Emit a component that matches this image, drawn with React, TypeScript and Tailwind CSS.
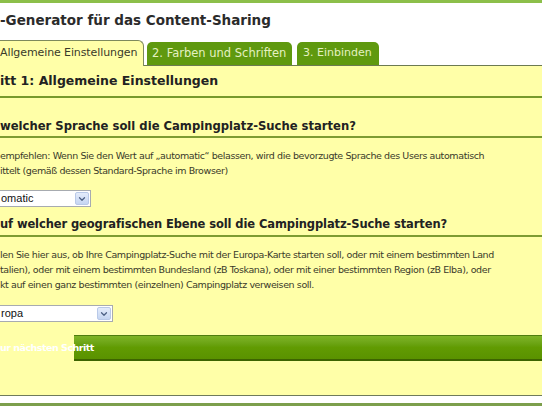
import { ChevronDown } from "lucide-react";

function FakeSelect({ value, width }: { value: string; width: string }) {
  return (
    <div className={`relative h-[17px] ${width} bg-white border border-[#a7abb0] border-l-0`}>
      <span className="block pl-[1px] text-[11px] leading-[15px] text-[#111] font-['Liberation_Sans',sans-serif]">
        {value}
      </span>
      {/* dropdown arrow box */}
      <div className="absolute right-[1px] top-[1px] bottom-[1px] w-[14px] flex items-center justify-center rounded-[2px] bg-gradient-to-b from-[#e4ecfb] to-[#c5d5f2] border border-[#b9c9e8]">
        <ChevronDown className="w-[10px] h-[10px] text-[#4d6185]" strokeWidth={3} />
      </div>
    </div>
  );
}

export default function App() {
  return (
    <div className="w-[542px] h-[406px] overflow-hidden bg-white flex flex-col text-[#333] font-['DejaVu_Sans',Verdana,sans-serif]">
      <div className="h-[3px] bg-[#8cbf4a]" />

      {/* Title */}
      <div className="h-[38px] flex items-center pb-[3px]">
        <h1 className="text-[13.5px] font-bold whitespace-nowrap text-[#2b2b2b]">
          -Generator für das Content-Sharing
        </h1>
      </div>

      {/* Tabs */}
      <div className="h-[25px] flex items-end border-b border-[#6c7a52] whitespace-nowrap">
        <div className="-mb-px h-[26px] w-[146px] -ml-[2px] pl-[1px] flex items-center bg-[#ffffa8] border border-b-0 border-[#7e8a5c] rounded-tr-[6px] text-[11px] tracking-[-0.1px] text-[#3a3a2a]">
          Allgemeine Einstellungen
        </div>
        <div className="ml-[3px] h-[23px] w-[145px] flex items-center pl-[5px] bg-[#5f990f] rounded-t-[5px] text-[11.5px] text-[#e4f1c2]">
          2. Farben und Schriften
        </div>
        <div className="ml-[5px] h-[23px] w-[82px] flex items-center pl-[6px] bg-[#5f990f] rounded-t-[5px] text-[11px] text-[#e4f1c2]">
          3. Einbinden
        </div>
      </div>

      {/* Content */}
      <div className="h-[329px] bg-[#ffffa8] flex flex-col whitespace-nowrap">
        <div className="h-[32px] flex items-center border-b-2 border-[#779a2c]">
          <h2 className="text-[12.5px] font-bold text-[#222]">itt 1: Allgemeine Einstellungen</h2>
        </div>

        <div className="mt-[19px] h-[19px] flex items-center border-b-2 border-[#7d9c32] box-content">
          <h3 className="text-[11.6px] font-bold text-[#222]"> welcher Sprache soll die Campingplatz-Suche starten?</h3>
        </div>

        <div className="mt-[10px] text-[9.5px] leading-[15px] tracking-[-0.4px] text-[#3a3a2a]">
          <div>empfehlen: Wenn Sie den Wert auf „automatic“ belassen, wird die bevorzugte Sprache des Users automatisch</div>
          <div>ittelt (gemäß dessen Standard-Sprache im Browser)</div>
        </div>

        <div className="mt-[12px]">
          <FakeSelect value="omatic" width="w-[91px]" />
        </div>

        <div className="mt-[8px] h-[20px] flex items-center border-b-2 border-[#7d9c32] box-content">
          <h3 className="text-[11.5px] font-bold tracking-[-0.1px] text-[#222]">uf welcher geografischen Ebene soll die Campingplatz-Suche starten?</h3>
        </div>

        <div className="mt-[10px] text-[9.5px] leading-[15px] tracking-[-0.4px] text-[#3a3a2a]">
          <div>len Sie hier aus, ob Ihre Campingplatz-Suche mit der Europa-Karte starten soll, oder mit einem bestimmten Land</div>
          <div>talien), oder mit einem bestimmten Bundesland (zB Toskana), oder mit einer bestimmten Region (zB Elba), oder</div>
          <div>kt auf einen ganz bestimmten (einzelnen) Campingplatz verweisen soll.</div>
        </div>

        <div className="mt-[13px]">
          <FakeSelect value="ropa" width="w-[113px]" />
        </div>

        {/* Next step button */}
        <div className="mt-[13px] h-[26px] relative flex">
          <div className="w-[74px]" />
          <div className="flex-1 bg-gradient-to-b from-[#7fb428] via-[#619b02] to-[#5a9200] border-b-2 border-[#3d6400] border-t border-t-[#4f7d10]" />
          <button className="absolute left-0 top-0 h-full flex items-center text-[9.5px] font-bold tracking-[-0.5px] text-white">
            ur nächsten Schritt
          </button>
        </div>
      </div>

      <div className="h-px bg-[#6f7b5c]" />
      <div className="h-[7px] bg-white" />
      <div className="flex-1 bg-[#7c9f4c]" />
    </div>
  );
}
